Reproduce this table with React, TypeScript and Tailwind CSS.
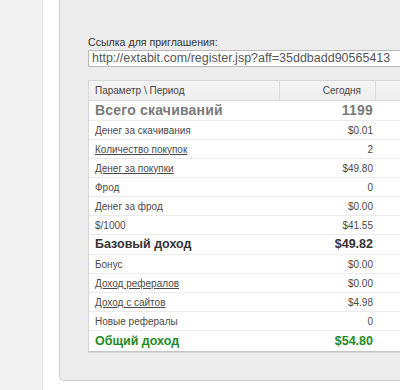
import React from "react";

type Row = {
  label: string;
  value: string;
  kind?: "total" | "base" | "sum";
  link?: boolean;
};

const rows: Row[] = [
  { label: "Всего скачиваний", value: "1199", kind: "total" },
  { label: "Денег за скачивания", value: "$0.01" },
  { label: "Количество покупок", value: "2", link: true },
  { label: "Денег за покупки", value: "$49.80", link: true },
  { label: "Фрод", value: "0" },
  { label: "Денег за фрод", value: "$0.00" },
  { label: "$/1000", value: "$41.55" },
  { label: "Базовый доход", value: "$49.82", kind: "base" },
  { label: "Бонус", value: "$0.00" },
  { label: "Доход рефералов", value: "$0.00", link: true },
  { label: "Доход с сайтов", value: "$4.98", link: true },
  { label: "Новые рефералы", value: "0" },
  { label: "Общий доход", value: "$54.80", kind: "sum" },
];

function rowText(kind?: Row["kind"]) {
  if (kind === "total") return "text-[14px] font-bold text-[#7a7a7a] tracking-[0.2px]";
  if (kind === "base") return "text-[12.5px] font-bold text-[#333]";
  if (kind === "sum") return "text-[12.5px] font-bold text-[#1f8a1f]";
  return "text-[10px] text-[#4a4a4a]";
}

export default function App() {
  return (
    <div className="w-[400px] h-[390px] overflow-hidden flex bg-white font-['Liberation_Sans',Arial,sans-serif]">
      <div className="w-[43px] shrink-0 bg-[#f3f3f3] border-r border-[#e2e2e2]" />
      <div className="w-[16px] shrink-0" />
      <div className="w-[420px] shrink-0 h-[381px] bg-[#ececec] border-l border-b border-[#cdcdcd] rounded-bl-[5px] pl-[28px] pt-[36px]">
        <div className="text-[10.6px] text-[#333] leading-[13px]">Ссылка для приглашения:</div>
        <div className="mt-[1px] h-[17px] bg-white border border-[#b9b9b9] pl-[3px] text-[12.5px] leading-[15px] text-[#555]">
          http://extabit.com/register.jsp?aff=35ddbadd90565413
        </div>
        <div className="mt-[13px] bg-white border border-[#d6d6d6] border-b-[#c4c4c4] shadow-[0_1px_0_#d8d8d8]">
          <div className="flex h-[20px] bg-gradient-to-b from-[#f5f5f5] to-[#ededed] border-b border-[#d9d9d9] text-[10px] text-[#444] leading-[19px]">
            <div className="w-[191px] pl-[6px] border-r border-[#dadada]">Параметр \ Период</div>
            <div className="w-[96px] pr-[14px] text-right border-r border-[#dadada]">Сегодня</div>
            <div className="flex-1" />
          </div>
          {rows.map((r, i) => {
            const big = !!r.kind;
            return (
              <div
                key={r.label}
                className={`flex ${big ? "h-[20px]" : "h-[19px]"} items-center ${i < rows.length - 1 ? "border-b border-[#ececec]" : ""}`}
              >
                <div className={`w-[191px] pl-[6px] ${rowText(r.kind)}`}>
                  <span className={r.link ? "underline" : ""}>{r.label}</span>
                </div>
                <div className={`w-[96px] pr-[3px] text-right ${rowText(r.kind)}`}>{r.value}</div>
                <div className="flex-1" />
              </div>
            );
          })}
        </div>
      </div>
    </div>
  );
}
